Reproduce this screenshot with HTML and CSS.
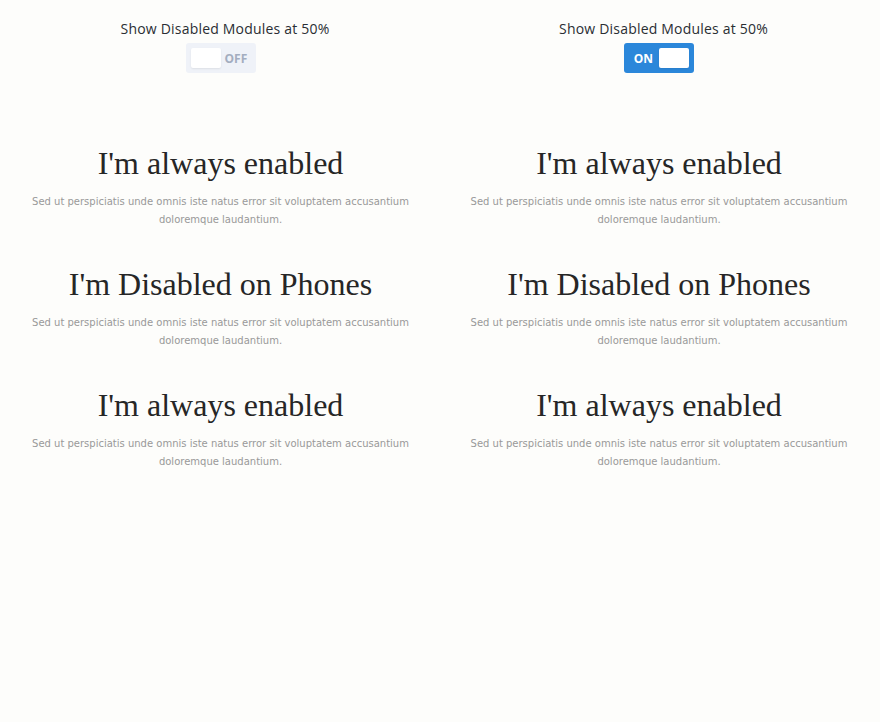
FILE: index.html
```html
<!DOCTYPE html>
<html lang="en">
<head>
    <meta charset="UTF-8">
    <meta name="viewport" content="width=device-width, initial-scale=1.0">
    <title>Disabled Modules</title>
    <link rel="stylesheet" href="styles.css">
</head>
<body>
<div class="columns">
    <!-- Toggle off -->
    <div class="column">
        <div class="control">
            <div class="control-label">Show Disabled Modules at 50%</div>
            <div class="toggle">
                <span class="knob"></span>
                <span class="toggle-text">OFF</span>
            </div>
        </div>

        <div class="module">
            <h2>I'm always enabled</h2>
            <p>Sed ut perspiciatis unde omnis iste natus error sit voluptatem accusantium doloremque laudantium.</p>
        </div>
        <div class="module">
            <h2>I'm Disabled on Phones</h2>
            <p>Sed ut perspiciatis unde omnis iste natus error sit voluptatem accusantium doloremque laudantium.</p>
        </div>
        <div class="module">
            <h2>I'm always enabled</h2>
            <p>Sed ut perspiciatis unde omnis iste natus error sit voluptatem accusantium doloremque laudantium.</p>
        </div>
    </div>

    <!-- Toggle on -->
    <div class="column">
        <div class="control">
            <div class="control-label">Show Disabled Modules at 50%</div>
            <div class="toggle on">
                <span class="toggle-text">ON</span>
                <span class="knob"></span>
            </div>
        </div>

        <div class="module">
            <h2>I'm always enabled</h2>
            <p>Sed ut perspiciatis unde omnis iste natus error sit voluptatem accusantium doloremque laudantium.</p>
        </div>
        <div class="module">
            <h2>I'm Disabled on Phones</h2>
            <p>Sed ut perspiciatis unde omnis iste natus error sit voluptatem accusantium doloremque laudantium.</p>
        </div>
        <div class="module">
            <h2>I'm always enabled</h2>
            <p>Sed ut perspiciatis unde omnis iste natus error sit voluptatem accusantium doloremque laudantium.</p>
        </div>
    </div>
</div>
</body>
</html>
```

FILE: styles.css
```css
body {
    margin: 0;
    padding: 0;
    background: #fdfdfb;
    font-family: "Open Sans", Arial, sans-serif;
    color: #333;
}

.columns {
    display: grid;
    grid-template-columns: 441px 436px;
}

.column {
    display: flex;
    flex-direction: column;
    align-items: center;
    padding-top: 20px;
}

.control {
    display: flex;
    flex-direction: column;
    align-items: center;
    gap: 5px;
    margin-bottom: 70px;
}

.control-label {
    font-size: 14px;
    font-weight: 500;
    line-height: 18px;
    letter-spacing: 0.2px;
    color: #2a2e33;
    padding-left: 9px;
}

.toggle {
    display: flex;
    align-items: center;
    gap: 4px;
    width: 70px;
    height: 30px;
    box-sizing: border-box;
    padding: 5px;
    border-radius: 3px;
    background: #eff2f8;
}

.knob {
    width: 30px;
    height: 20px;
    border-radius: 2px;
    background: #fff;
    box-shadow: 0 1px 2px rgba(0, 0, 0, 0.08);
}

.toggle-text {
    font-size: 12px;
    font-weight: 700;
    color: #a3adbf;
}

.toggle.on {
    background: #2b87da;
    justify-content: flex-end;
    gap: 5px;
}

.toggle.on .toggle-text {
    color: #fff;
    margin-right: 1px;
}

.module {
    width: 390px;
    text-align: center;
    margin-bottom: 35px;
}

.module h2 {
    margin: 0 0 10px;
    font-family: "Liberation Serif", "DejaVu Serif", serif;
    font-weight: 400;
    font-size: 32px;
    line-height: 40px;
    color: #262626;
}

.module p {
    margin: 0;
    font-family: "DejaVu Sans", Verdana, sans-serif;
    font-size: 10px;
    line-height: 18px;
    color: #999;
}
```
